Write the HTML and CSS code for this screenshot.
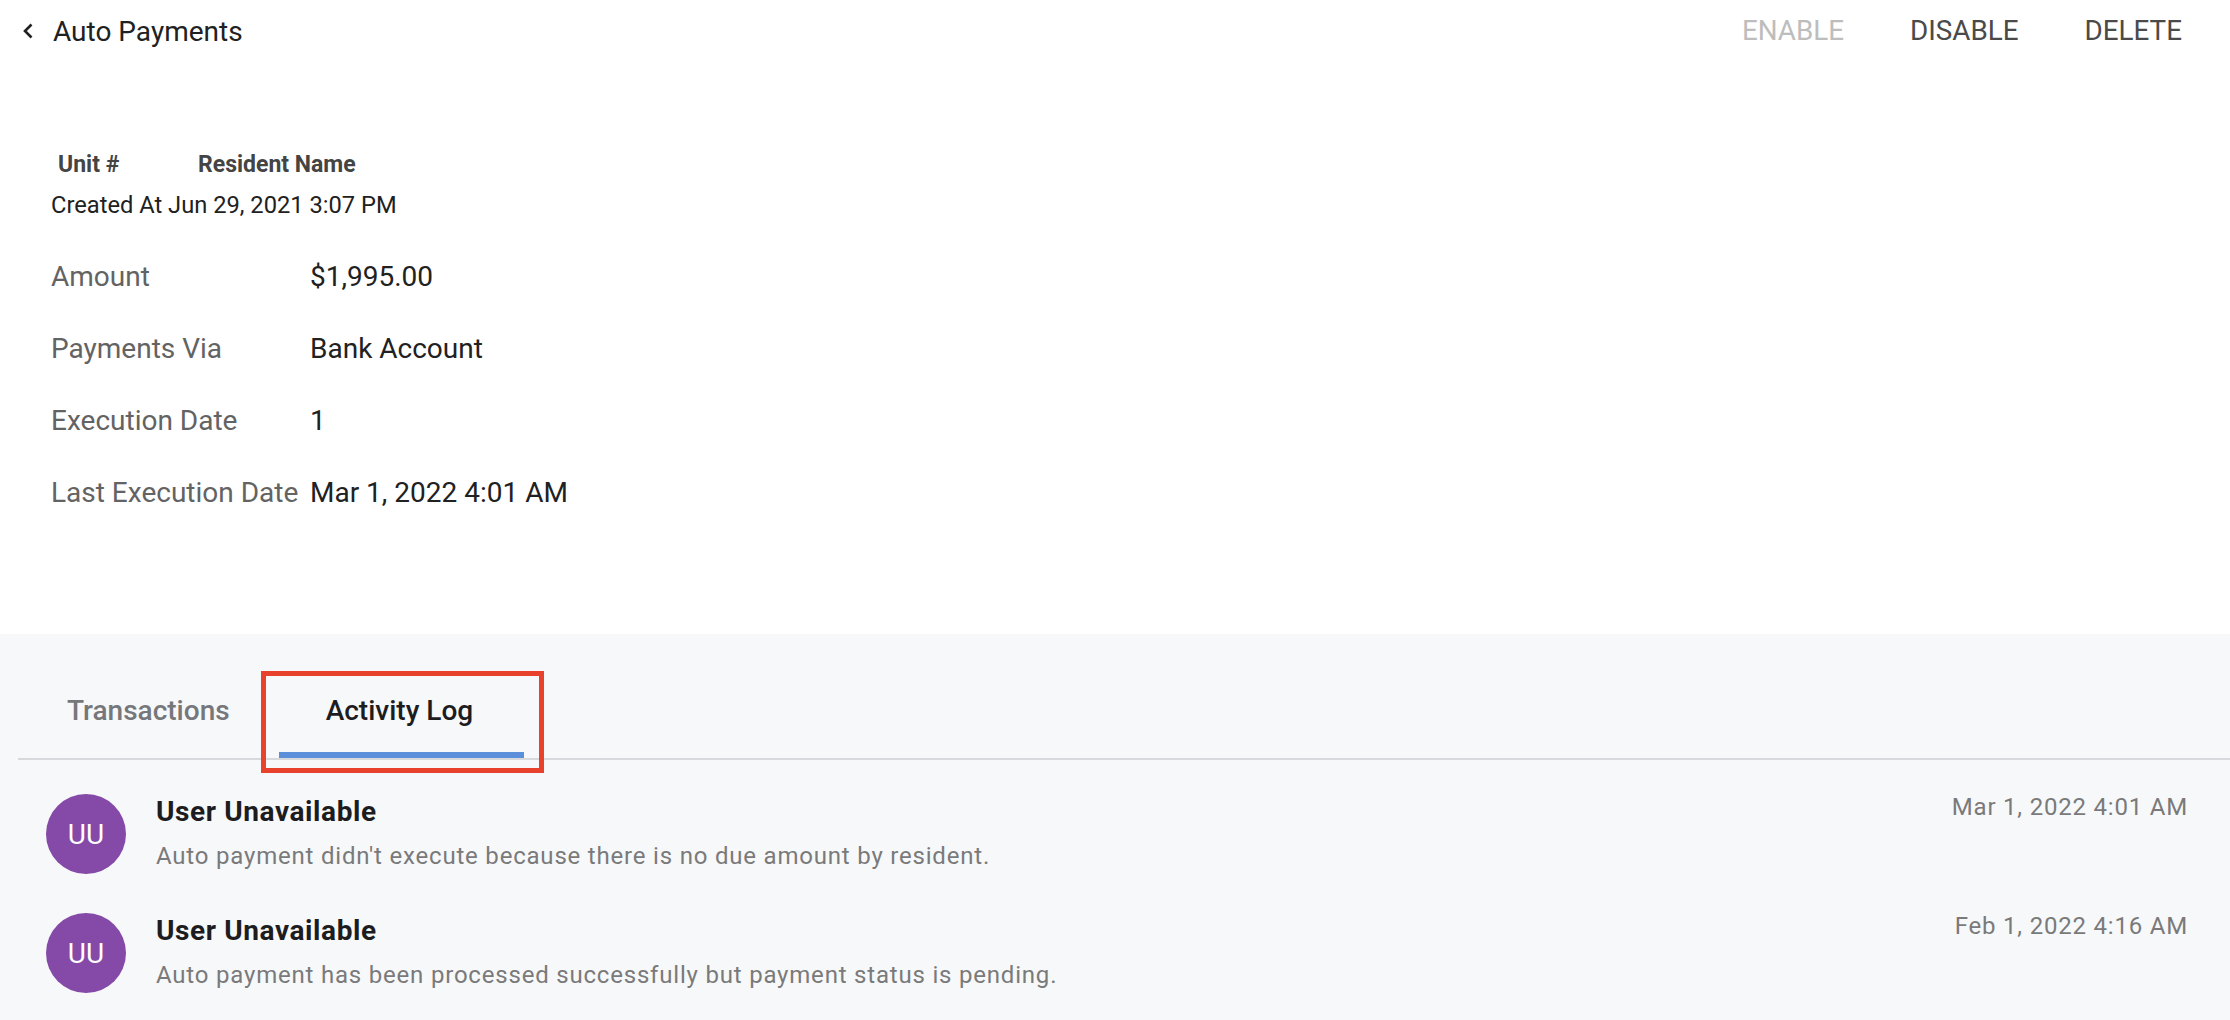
FILE: index.html
```html
<!DOCTYPE html>
<html lang="en">
<head>
<meta charset="utf-8">
<title>Auto Payments</title>
<link rel="stylesheet" href="styles.css">
</head>
<body>
<div class="page">
  <header class="topbar">
    <div class="title-wrap">
      <svg class="back" width="12" height="16" viewBox="0 0 12 16" aria-hidden="true"><path d="M9.5 1.5 L3 8 L9.5 14.5" fill="none" stroke="#212121" stroke-width="2.6"/></svg>
      <h1 class="title">Auto Payments</h1>
    </div>
    <div class="actions">
      <button class="btn btn-disabled">ENABLE</button>
      <button class="btn">DISABLE</button>
      <button class="btn">DELETE</button>
    </div>
  </header>

  <section class="info">
    <div class="meta-head">
      <span class="meta-unit">Unit #</span>
      <span class="meta-name">Resident Name</span>
    </div>
    <div class="created">Created At Jun 29, 2021 3:07 PM</div>
    <div class="details">
      <div class="label">Amount</div><div class="value">$1,995.00</div>
      <div class="label">Payments Via</div><div class="value">Bank Account</div>
      <div class="label">Execution Date</div><div class="value">1</div>
      <div class="label">Last Execution Date</div><div class="value">Mar 1, 2022 4:01 AM</div>
    </div>
  </section>

  <section class="lower">
    <nav class="tabs">
      <div class="tab">Transactions</div>
      <div class="tab tab-active">Activity Log<span class="highlight"></span></div>
    </nav>
    <ul class="log">
      <li class="log-item">
        <div class="avatar">UU</div>
        <div class="log-text">
          <div class="log-user">User Unavailable</div>
          <div class="log-desc">Auto payment didn't execute because there is no due amount by resident.</div>
        </div>
        <div class="log-date">Mar 1, 2022 4:01 AM</div>
      </li>
      <li class="log-item">
        <div class="avatar">UU</div>
        <div class="log-text">
          <div class="log-user">User Unavailable</div>
          <div class="log-desc">Auto payment has been processed successfully but payment status is pending.</div>
        </div>
        <div class="log-date">Feb 1, 2022 4:16 AM</div>
      </li>
    </ul>
  </section>
</div>
</body>
</html>
```
FILE: styles.css
```css
* { box-sizing: border-box; }
html, body {
  margin: 0;
  padding: 0;
  background: #ffffff;
  font-family: Roboto, "Noto Sans", Arial, sans-serif;
  color: #212121;
}
.page {
  width: 2230px;
  height: 1020px;
  overflow: hidden;
  display: flex;
  flex-direction: column;
}
.topbar {
  flex-shrink: 0;
  height: 62px;
  display: flex;
  align-items: center;
  justify-content: space-between;
  padding: 0 48px 0 22px;
}
.title-wrap {
  display: flex;
  align-items: center;
  gap: 19px;
}
.back { display: block; }
.title {
  margin: 0;
  font-size: 28px;
  font-weight: 400;
  color: #212121;
}
.actions {
  display: flex;
  gap: 66px;
  margin-top: -2px;
}
.btn {
  background: none;
  border: 0;
  padding: 0;
  font-family: inherit;
  font-size: 27.8px;
  font-weight: 400;
  color: #4a4a4a;
}
.btn-disabled { color: #bdbdbd; }

.info {
  flex-shrink: 0;
  padding: 88px 0 106px 51px;
}
.meta-head {
  display: flex;
  height: 30px;
  line-height: 30px;
  font-size: 23px;
  font-weight: 700;
  color: #444444;
  padding-left: 7px;
}
.meta-unit { width: 140px; }
.created {
  margin-top: 9px;
  font-size: 23.7px;
  line-height: 32px;
  color: #212121;
}
.details {
  margin-top: 19px;
  display: grid;
  grid-template-columns: 259px auto;
  grid-auto-rows: 72px;
  align-items: center;
  font-size: 28px;
}
.label { color: #636363; }
.value { color: #212121; }

.lower {
  flex: 1;
  min-height: 0;
  overflow: hidden;
  background: #f7f8fa;
  padding-top: 28px;
}
.tabs {
  display: flex;
  margin-left: 18px;
  border-bottom: 2px solid #d8d9dc;
}
.tab {
  position: relative;
  height: 96px;
  display: flex;
  align-items: center;
  padding: 0 49px;
  font-size: 28px;
  font-weight: 500;
  color: #75777b;
}
.tab-active {
  color: #1d1d1f;
  padding: 0 51px 0 47px;
}
.tab-active::after {
  content: "";
  position: absolute;
  left: 0;
  right: 0;
  bottom: 0;
  height: 6px;
  background: #5b8fd9;
}
.highlight {
  position: absolute;
  left: -18px;
  top: 9px;
  right: -20px;
  bottom: -15px;
  border: 5px solid #e8412c;
  z-index: 2;
}
.log {
  list-style: none;
  margin: 0;
  padding: 34px 42px 0 46px;
}
.log-item {
  display: flex;
  align-items: flex-start;
  height: 119px;
}
.avatar {
  width: 80px;
  height: 80px;
  border-radius: 50%;
  background: #8549a7;
  color: #ffffff;
  font-size: 28px;
  display: flex;
  align-items: center;
  justify-content: center;
  flex-shrink: 0;
}
.log-text {
  flex: 1;
  margin-left: 30px;
}
.log-user {
  font-size: 28px;
  font-weight: 700;
  line-height: 36px;
  letter-spacing: 0.6px;
  color: #1d1d1f;
}
.log-desc {
  margin-top: 8px;
  font-size: 24px;
  line-height: 36px;
  letter-spacing: 0.8px;
  color: #7a7a7a;
}
.log-date {
  margin-top: -1px;
  font-size: 24px;
  line-height: 28px;
  letter-spacing: 0.8px;
  color: #7a7a7a;
}
```
